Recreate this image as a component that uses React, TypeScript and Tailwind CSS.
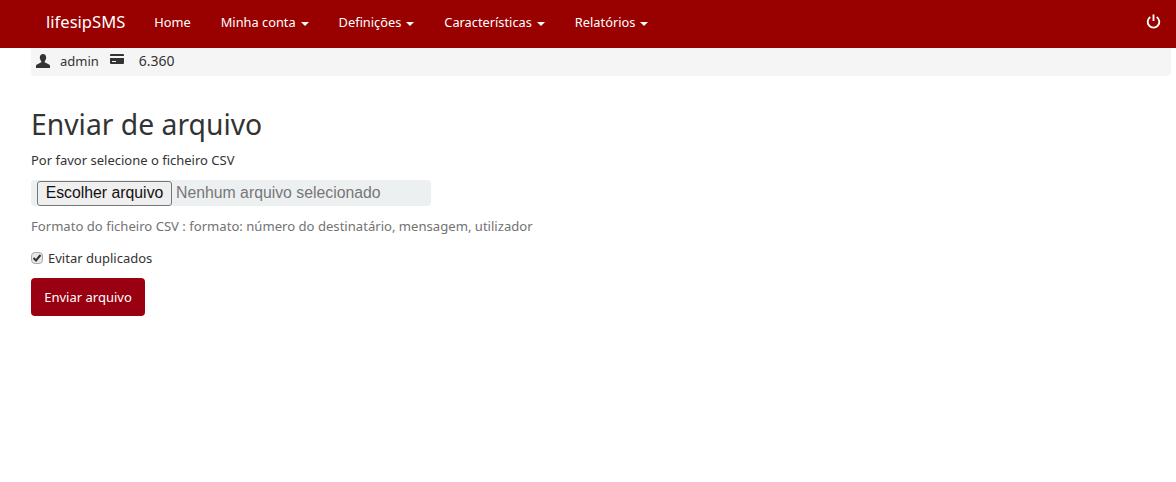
const menus = [
  { label: 'Home' },
  { label: 'Minha conta', caret: true },
  { label: 'Definições', caret: true },
  { label: 'Características', caret: true },
  { label: 'Relatórios', caret: true },
]

function Caret() {
  return <span className="ml-[5px] inline-block h-0 w-0 border-x-4 border-t-4 border-x-transparent border-t-white align-middle" />
}

export default function App() {
  return (
    <div className="min-h-[482px] bg-white font-['Noto_Sans',sans-serif] text-[13px] leading-5 text-[#333]">
      {/* Navbar */}
      <nav className="flex h-12 items-center bg-[#990000] pb-1 pl-[46px] pr-[15px] text-[12.8px] text-white">
        <a className="mr-[14px] text-[16.6px]">lifesipSMS</a>
        {menus.map((m) => (
          <a key={m.label} className="px-[15px]">
            {m.label}
            {m.caret && <Caret />}
          </a>
        ))}
        <svg className="mb-0.5 ml-auto" width="15" height="15" viewBox="0 0 16 16" fill="none" stroke="white" strokeWidth="2">
          <path d="M4.6 3.2a6.2 6.2 0 1 0 6.8 0" />
          <path d="M8 0.5v7" />
        </svg>
      </nav>

      <main className="px-[31px]">
        {/* User info */}
        <div className="-mr-[26px] flex h-7 items-center rounded-b bg-[#f5f5f5] pb-0.5 pl-[5px]">
          <svg width="14" height="14" viewBox="0 0 14 14" fill="#333">
            <path d="M7 0c2 0 3.2 1.5 3.2 3.6 0 1.5-.7 2.8-1.5 3.6v1.1l4.3 2.2c.6.3 1 .7 1 1.3V14H0v-2.200c0-.6.4-1 1-1.300l4.300-2.200V7.200C4.500 6.400 3.800 5.100 3.800 3.600 3.800 1.500 5 0 7 0z" />
          </svg>
          <span className="ml-[10px]">admin</span>
          <svg className="mb-1 ml-[11px]" width="14" height="12" viewBox="0 0 14 12" fill="#333">
            <path d="M1 1h12a1 1 0 0 1 1 1v1H0V2a1 1 0 0 1 1-1zM0 5h14v5a1 1 0 0 1-1 1H1a1 1 0 0 1-1-1zm2 3v1h4V8z" fillRule="evenodd" />
          </svg>
          <span className="ml-[15px] text-[14px]">6.360</span>
        </div>

        <h1 className="mt-[32px] mb-[9px] text-[28.3px] leading-[33px] font-normal">Enviar de arquivo</h1>
        <p className="mb-[10px]">Por favor selecione o ficheiro CSV</p>

        <div className="flex h-[26px] w-[400px] items-center rounded bg-[#ecf0f1] pl-1.5 font-['Liberation_Sans',sans-serif] text-[15.8px]">
          <button className="h-[25px] w-[135px] rounded-[3px] border border-[#767676] bg-[#efefef] text-[#111]">Escolher arquivo</button>
          <span className="ml-1 text-[#777]">Nenhum arquivo selecionado</span>
        </div>

        <p className="mt-[10px] mb-[12px] text-[13.1px] text-[#737373]">Formato do ficheiro CSV : formato: número do destinatário, mensagem, utilizador</p>

        <label className="mb-[10px] flex items-center">
          <span className="mr-[5px] flex h-3 w-3 items-center justify-center rounded-sm border border-[#aaa] bg-[#e8e8e8]">
            <svg width="10" height="10" viewBox="0 0 10 10" fill="none" stroke="#333" strokeWidth="2">
              <path d="M1.500 5l2.500 2.500 4.500-5.500" />
            </svg>
          </span>
          Evitar duplicados
        </label>

        <button className="h-[38px] w-[114px] rounded bg-[#990011] text-white">Enviar arquivo</button>
      </main>
    </div>
  )
}
